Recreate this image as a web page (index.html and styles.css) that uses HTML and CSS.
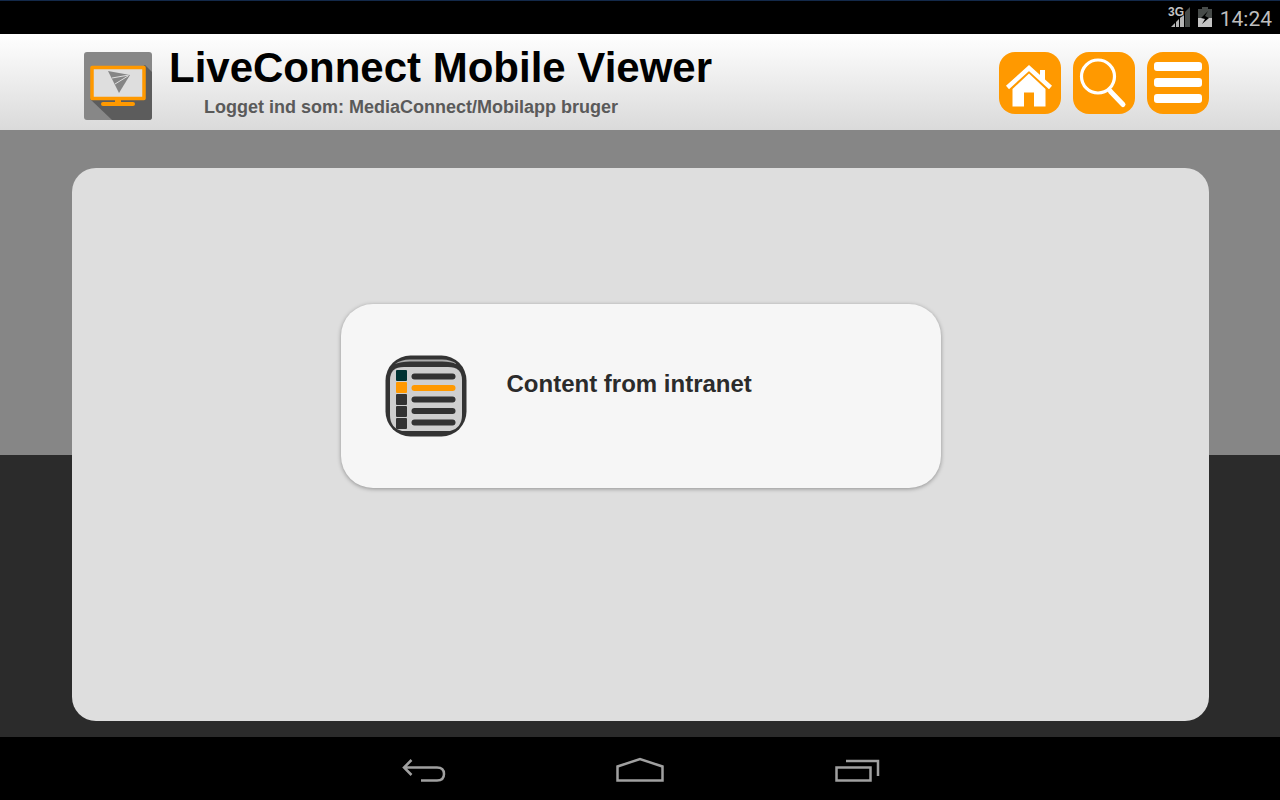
FILE: index.html
```html
<!DOCTYPE html>
<html lang="da">
<head>
  <meta charset="UTF-8">
  <meta name="viewport" content="width=device-width, initial-scale=1">
  <title>LiveConnect Mobile Viewer</title>
  <link rel="stylesheet" href="styles.css">
</head>
<body>
  <div class="statusbar">
    <svg class="signal" width="24" height="24" viewBox="0 0 24 24">
      <g fill="#b5b5b5">
        <path d="M3 22l4-4v4z"/>
        <path d="M8 17l3-3v8H8z"/>
        <path d="M12 13l4-4v13h-4z"/>
      </g>
      <path d="M17 7l5-5v20h-5z" fill="#474b49"/>
      <text x="0" y="11" class="signal-text">3G</text>
    </svg>
    <svg class="battery" width="14" height="22" viewBox="0 0 14 22">
      <path d="M0 3h4V1h6v2h4v9H0z" fill="#474b49"/>
      <path d="M0 12h14v9H0z" fill="#c4c4c4"/>
      <path d="M10 5l-7 7 4 1-3 5 7-6-4-2z" fill="#000"/>
    </svg>
    <span class="clock">14:24</span>
  </div>

  <header class="header">
    <svg class="logo" width="68" height="68" viewBox="0 0 68 68">
      <rect width="68" height="68" rx="3" fill="#878787"/>
      <path d="M61 13l7 7v45q0 3-3 3H28L6 47z" fill="#5c5c5c"/>
      <rect x="8" y="15.500" width="52" height="31" fill="#dedede" stroke="#ff9900" stroke-width="3.500" stroke-linejoin="round"/>
      <path d="M31 46h6v5h-6z" fill="#ff9900"/>
      <path d="M19 52h30" stroke="#ff9900" stroke-width="4" stroke-linecap="round"/>
      <path d="M24 19l22 4-11 18z" fill="#858585"/>
      <path d="M28 26l17-3M31 32l13-8" stroke="#dedede" stroke-width="1"/>
    </svg>
    <div class="heading">
      <h1>LiveConnect Mobile Viewer</h1>
      <p>Logget ind som: MediaConnect/Mobilapp bruger</p>
    </div>
    <div class="actions">
      <button type="button" aria-label="Hjem">
        <svg width="62" height="62" viewBox="0 0 62 62">
          <path d="M41 18h5v13l-5-5z" fill="#fff"/>
          <path d="M8.500 35.500l21.500-19.500L51.500 35.500" fill="none" stroke="#fff" stroke-width="4.500"/>
          <path d="M30 21.500L46.500 37v17.500H35V40.500H25v14H13.500V37z" fill="#fff"/>
        </svg>
      </button>
      <button type="button" aria-label="Søg">
        <svg width="62" height="62" viewBox="0 0 62 62" fill="none" stroke="#fff">
          <circle cx="25" cy="24.500" r="16.500" stroke-width="3.200"/>
          <path d="M35 36.500l3 3" stroke-width="4"/>
          <path d="M37.500 39.500L50 52.500" stroke-width="5" stroke-linecap="round"/>
        </svg>
      </button>
      <button type="button" aria-label="Menu">
        <svg width="62" height="62" viewBox="0 0 62 62" fill="#fff">
          <rect x="7" y="10" width="48" height="9" rx="3"/>
          <rect x="7" y="26" width="48" height="9" rx="3"/>
          <rect x="7" y="42" width="48" height="9" rx="3"/>
        </svg>
      </button>
    </div>
  </header>

  <main class="main">
    <div class="panel">
      <a class="card" href="#">
        <svg width="82" height="82" viewBox="0 0 82 82">
          <rect x="0.500" y="0.500" width="81" height="81" rx="25" fill="#333"/>
          <path d="M10 9q6-4.500 15-4.500h32q9 0 15 4.500-6-2.500-15-2.500H25q-9 0-15 2.500z" fill="#aaa"/>
          <path d="M5 25q0-13 14-13h44q14 0 14 13v35q0 13-12 16H17Q5 73 5 60z" fill="#cfcfcf"/>
          <rect x="11" y="15" width="11" height="11" rx="1" fill="#033"/>
          <rect x="11" y="27" width="11" height="11" rx="1" fill="#f90"/>
          <rect x="11" y="39" width="11" height="11" rx="1" fill="#333"/>
          <rect x="11" y="51" width="11" height="11" rx="1" fill="#333"/>
          <rect x="11" y="63" width="11" height="11" rx="1" fill="#333"/>
          <g stroke="#333" stroke-width="6" stroke-linecap="round">
            <path d="M29.500 21.500h38"/>
            <path d="M29.500 33h38" stroke="#f90"/>
            <path d="M29.500 44.500h38"/>
            <path d="M29.500 56h38"/>
            <path d="M29.500 67.500h38"/>
          </g>
        </svg>
        <span>Content from intranet</span>
      </a>
    </div>
  </main>

  <nav class="navbar">
    <button type="button" aria-label="Tilbage">
      <svg width="48" height="32" viewBox="0 0 48 32">
        <path d="M11.500 3L4 10.500l7.500 7.500M4 10.500h33q7 0 7 6.500t-7 6.500H21"/>
      </svg>
    </button>
    <button type="button" aria-label="Startside">
      <svg width="48" height="32" viewBox="0 0 48 32">
        <path d="M1.500 23.500V9.500L24 2l22.500 7.500v14z"/>
      </svg>
    </button>
    <button type="button" aria-label="Seneste">
      <svg width="48" height="32" viewBox="0 0 48 32">
        <path d="M4.500 10.500h34v13h-34zM14 4h32v15"/>
      </svg>
    </button>
  </nav>
</body>
</html>
```
FILE: styles.css
```css
* {
  box-sizing: border-box;
}

body {
  margin: 0;
  min-height: 100vh;
  display: flex;
  flex-direction: column;
  font-family: "Liberation Sans", Arial, sans-serif;
  background: #000;
}

svg {
  display: block;
}

button {
  padding: 0;
  border: none;
  background: none;
  cursor: pointer;
}

.statusbar {
  height: 34px;
  padding: 0 8px 2px;
  border-top: 1px solid #13294a;
  display: flex;
  align-items: center;
  justify-content: flex-end;
  gap: 8px;
  background: #000;
}

.signal {
  overflow: visible;
}

.signal-text {
  font: bold 12px "Liberation Sans", sans-serif;
  fill: #c4c4c4;
  stroke: #000;
  stroke-width: 2px;
  paint-order: stroke;
}

.signal + .battery {
  margin-left: -2px;
}

.clock {
  font-family: Roboto, sans-serif;
  font-size: 21px;
  line-height: 24px;
  color: #bebebe;
  padding-top: 4px;
}

.header {
  height: 96px;
  padding: 0 71px 0 84px;
  display: flex;
  align-items: flex-start;
  background: linear-gradient(#fff, #dadada);
}

.logo {
  margin-top: 18px;
  flex: none;
}

.heading {
  margin: 10px 0 0 17px;
}

.heading h1 {
  margin: 0;
  font-size: 42px;
  line-height: 48px;
  color: #000;
}

.heading p {
  margin: 4px 0 0 35px;
  font-size: 18px;
  font-weight: bold;
  line-height: 22px;
  color: #5a5a5a;
}

.actions {
  display: flex;
  gap: 12px;
  margin: 18px 0 0 auto;
}

.actions button {
  width: 62px;
  height: 62px;
  border-radius: 16px;
  background: #ff9900;
}

.main {
  flex: 1;
  display: flex;
  padding: 38px 71px 16px 72px;
  background: linear-gradient(#868686 53.5%, #2b2b2b 53.5%);
}

.panel {
  flex: 1;
  padding: 136px 24px 24px;
  border-radius: 24px;
  background: #dedede;
}

.card {
  display: flex;
  gap: 40px;
  max-width: 600px;
  min-height: 184px;
  margin: 0 auto;
  padding: 51px 44px;
  border-radius: 32px;
  background: #f6f6f6;
  box-shadow: 0 1px 4px rgba(0, 0, 0, 0.35);
  color: #2b2b2b;
  font-size: 24px;
  font-weight: bold;
  line-height: 28px;
  text-decoration: none;
}

.card span {
  padding-top: 15px;
}

.navbar {
  height: 63px;
  display: flex;
  align-items: center;
  justify-content: center;
  gap: 168px;
  background: #000;
}

.navbar svg {
  margin-top: 8px;
  fill: none;
  stroke: #a0a0a0;
  stroke-width: 2.5px;
}
```
